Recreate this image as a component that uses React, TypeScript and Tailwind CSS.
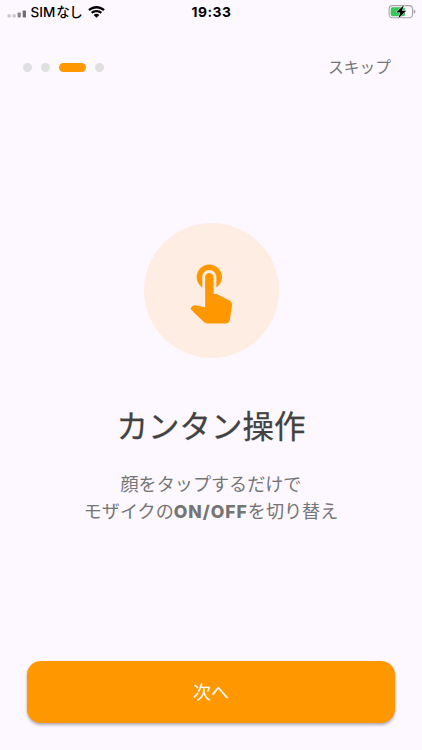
const STEPS = 4;
const CURRENT_STEP = 2;

function StatusBar() {
  return (
    <div className="grid h-6 grid-cols-[1fr_auto_1fr] items-center pl-[7px] pr-1.5 text-black">
      <div className="flex items-center">
        <svg width="20" height="8" viewBox="0 0 20 8" className="mt-[3px]">
          <rect x="0.5" y="4.2" width="3.3" height="3.2" rx="0.9" fill="#cbc6cc" />
          <rect x="5.5" y="4.2" width="3.3" height="3.2" rx="0.9" fill="#cbc6cc" />
          <rect x="10.6" y="2.4" width="3.2" height="5" rx="0.9" fill="#89858b" />
          <rect x="15.7" y="0.4" width="3.3" height="7" rx="0.9" fill="#716d73" />
        </svg>
        <span className="ml-[3.5px] whitespace-nowrap text-[13.5px] font-medium leading-6">
          SIM<span className="ml-[1px] inline-block tracking-[-0.6px]">なし</span>
        </span>
        <svg width="17" height="12" viewBox="0 0 17 12" className="ml-[5.5px]">
          <path d="M8.5 0C5.2 0 2.3 1.3.2 3.3l1.6 1.7C3.6 3.3 5.9 2.4 8.5 2.4s4.9.9 6.7 2.6l1.6-1.7C14.7 1.3 11.8 0 8.5 0Z" />
          <path d="M8.5 4C6.3 4 4.4 4.8 2.9 6.1l1.6 1.7c1.1-1 2.5-1.5 4-1.5s2.9.5 4 1.5l1.6-1.7C12.6 4.8 10.7 4 8.5 4Z" />
          <path d="M8.5 7.8c-1.1 0-2.1.4-2.8 1.1l2.8 2.9 2.8-2.9c-.7-.7-1.7-1.1-2.8-1.1Z" />
        </svg>
      </div>
      <span className="text-[13.8px] font-bold leading-6 tracking-[0.5px]">19:33</span>
      <svg width="28" height="16" viewBox="0 0 28 16" className="justify-self-end">
        <rect x="1.1" y="1.6" width="23.4" height="12.2" rx="3.5" fill="none" stroke="#a9a4ab" strokeWidth="1.1" />
        <path d="M25.7 5.6c1.1.4 1.7 1.2 1.7 2.1s-.6 1.7-1.7 2.1Z" fill="#a9a4ab" />
        <rect x="2.7" y="3.2" width="14.3" height="9" rx="2" fill="#35c759" />
        <path
          d="M16 1 8.200 8.400h4.100l-2 6 7.900-7.600h-4.300Z"
          fill="#000"
          stroke="#fdf7ff"
          strokeWidth="1"
          paintOrder="stroke"
        />
      </svg>
    </div>
  );
}

function StepDots() {
  return (
    <div className="-mt-0.5 flex items-center gap-[9px]">
      {Array.from({ length: STEPS }, (_, index) => (
        <span
          key={index}
          className={
            index === CURRENT_STEP
              ? 'h-[9px] w-[27px] rounded-full bg-[#ff9800]'
              : 'size-[9px] rounded-full bg-[#e0dfe1]'
          }
        />
      ))}
    </div>
  );
}

function TouchIcon() {
  return (
    <svg width="67.5" height="67.5" viewBox="0 0 24 24" fill="#ff9800">
      <path d="M9 11.24V7.5C9 6.12 10.12 5 11.5 5S14 6.12 14 7.5v3.74c1.21-.81 2-2.18 2-3.74C16 5.01 13.99 3 11.5 3S7 5.01 7 7.5c0 1.56.79 2.93 2 3.74z" />
      <path d="M18.84 15.87l-4.54-2.26c-.17-.07-.35-.11-.54-.11H13v-6c0-.83-.67-1.5-1.5-1.5S10 6.67 10 7.5v10.74l-3.43-.72c-.38-.08-.72.02-1 .29l-.53.53c-.22.23-.22.56 0 .79l4.43 4.28c.4.39.9.59 1.46.59h6.390c.8 0 1.380-.53 1.490-1.280l.75-5.270c.11-.7-.27-1.310-.72-1.580z" />
    </svg>
  );
}

export default function App() {
  return (
    <div className="flex h-screen flex-col overflow-hidden bg-[#fdf7ff] font-['Inter','Noto_Sans_CJK_JP',sans-serif]">
      <StatusBar />
      <header className="mt-[22px] flex h-11 items-center justify-between pl-[22.5px] pr-[31px]">
        <StepDots />
        <button className="text-[15.75px] leading-6 text-[#757575]">スキップ</button>
      </header>
      <main className="flex flex-1 flex-col items-center pt-[132.5px]">
        <div className="flex size-[135px] items-center justify-center rounded-full bg-[#feede3]">
          <TouchIcon />
        </div>
        <h1 className="mt-[46.5px] text-[31.5px] font-normal leading-[46px] text-[#424242] [-webkit-text-stroke:0.25px_#424242]">
          カンタン操作
        </h1>
        <p className="mt-[21px] text-center text-[18.1px] leading-[27px] text-[#757575]">
          顔をタップするだけで
          <br />
          モザイクの<b className="text-[17.6px] font-extrabold tracking-[0.95px]">ON/OFF</b>を切り替え
        </p>
      </main>
      <footer className="px-[27px] pb-[27px]">
        <button className="h-[62px] w-full rounded-[14px] bg-[#ff9800] text-[18px] text-white shadow-[0_2px_3px_rgba(0,0,0,0.3)]">
          次へ
        </button>
      </footer>
    </div>
  );
}
